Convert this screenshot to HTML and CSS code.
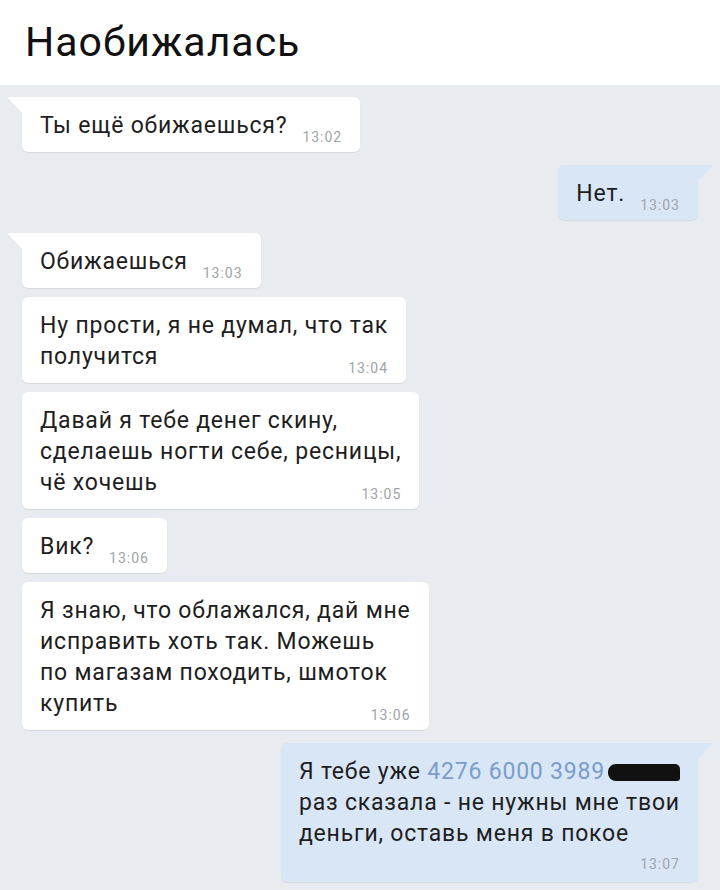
FILE: index.html
```html
<!DOCTYPE html>
<html lang="ru">
<head>
<meta charset="UTF-8" />
<meta name="viewport" content="width=device-width, initial-scale=1" />
<title>Наобижалась</title>
<link rel="stylesheet" href="styles.css">
</head>
<body>
  <header class="top-bar">
    <h1 class="title">Наобижалась</h1>
  </header>

  <main class="chat">
    <div class="msg in tail">
      <p class="text">Ты ещё обижаешься?<span class="time">13:02</span></p>
    </div>

    <div class="msg out tail gap">
      <p class="text">Нет.<span class="time">13:03</span></p>
    </div>

    <div class="msg in tail gap">
      <p class="text">Обижаешься<span class="time">13:03</span></p>
    </div>
    <div class="msg in">
      <p class="text">Ну прости, я не думал, что так<br>получится<span class="time">13:04</span></p>
    </div>
    <div class="msg in">
      <p class="text">Давай я тебе денег скину,<br>сделаешь ногти себе, ресницы,<br>чё хочешь<span class="time">13:05</span></p>
    </div>
    <div class="msg in">
      <p class="text">Вик?<span class="time">13:06</span></p>
    </div>
    <div class="msg in">
      <p class="text">Я знаю, что облажался, дай мне<br>исправить хоть так. Можешь<br>по магазам походить, шмоток<br>купить<span class="time">13:06</span></p>
    </div>

    <div class="msg out tail gap">
      <p class="text">Я тебе уже <span class="card">4276 6000 3989</span><span class="redacted"></span><br>раз сказала - не нужны мне твои<br>деньги, оставь меня в покое<span class="time own-line">13:07</span></p>
    </div>
  </main>
</body>
</html>
```

FILE: styles.css
```css
body {
  margin: 0;
  font-family: Roboto, "Noto Sans", sans-serif;
  background: #e8ecf1;
  color: #1e1e1e;
}
.top-bar {
  background: #fff;
  height: 85px;
}
.title {
  margin: 0;
  padding-left: 25px;
  font-size: 41px;
  font-weight: 400;
  letter-spacing: 1px;
  line-height: 85px;
  color: #111;
}
.chat {
  display: flex;
  flex-direction: column;
  align-items: flex-start;
  gap: 9px;
  padding: 12px 22px;
}
.msg {
  position: relative;
  background: #fff;
  border-radius: 6px;
  box-shadow: 0 1px 1px rgba(0,0,0,0.08);
  padding: 13px 18px 6px 18px;
}
.msg.gap {
  margin-top: 4px;
}
.msg.out {
  align-self: flex-end;
  background: #d9e6f6;
}
/* little corner tail on the first bubble of a group */
.msg.in.tail {
  border-top-left-radius: 0;
}
.msg.out.tail {
  border-top-right-radius: 0;
}
.msg.in.tail::before {
  content: "";
  position: absolute;
  top: 0;
  left: -15px;
  border-top: 16px solid #fff;
  border-left: 15px solid transparent;
}
.msg.out.tail::before {
  content: "";
  position: absolute;
  top: 0;
  right: -15px;
  border-top: 16px solid #d9e6f6;
  border-right: 15px solid transparent;
}
.text {
  margin: 0;
  font-size: 23px;
  letter-spacing: 0.8px;
  line-height: 31px;
  white-space: nowrap;
}
.time {
  float: right;
  margin: 18px 0 0 15px;
  font-size: 14px;
  line-height: 18px;
  letter-spacing: 1px;
  color: #a0a4a9;
}
.time.own-line {
  float: none;
  display: block;
  text-align: right;
  margin: 6px 0 3px 0;
}
.card {
  color: #7b9dc9;
}
.redacted {
  display: inline-block;
  width: 72px;
  height: 17px;
  margin-left: 3px;
  background: #111;
  border-radius: 8px 5px 3px 8px;
  vertical-align: -2px;
}
```
